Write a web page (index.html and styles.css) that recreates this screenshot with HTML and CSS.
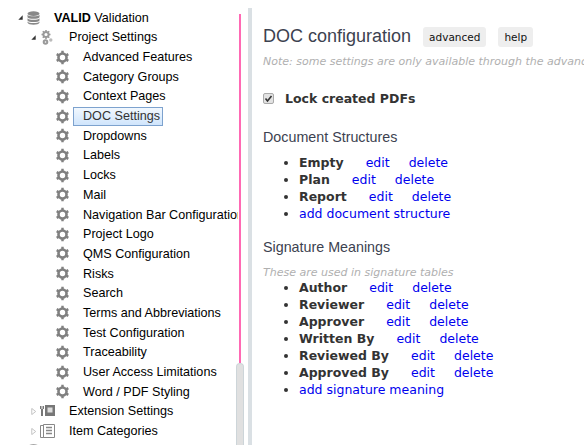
FILE: index.html
```html
<!DOCTYPE html>
<html lang="en">
<head>
<meta charset="utf-8">
<title>DOC configuration</title>
<link rel="stylesheet" href="styles.css">
</head>
<body>
<div class="page">
  <aside class="tree-pane">
    <div class="tree">
      <div class="row root">
        <svg class="arrow" viewBox="0 0 8 8"><path d="M6.500 1.500V6.500H1.500Z"/></svg>
        <svg class="icon db" viewBox="0 0 13 14"><ellipse cx="6.500" cy="2.600" rx="6" ry="2.400"/><path d="M.5 3.800c1 2 11 2 12 0v2.400c-1 2-11 2-12 0zM.5 7.200c1 2 11 2 12 0v2.400c-1 2-11 2-12 0zM.5 10.600c1 2 11 2 12 0v.8c-.5 3-11.500 3-12 0z"/></svg>
        <span class="label"><b>VALID</b> Validation</span>
      </div>
      <div class="row level1">
        <svg class="arrow" viewBox="0 0 8 8"><path d="M6.500 1.500V6.500H1.500Z"/></svg>
        <svg class="icon gears" viewBox="0 0 12 15"><g fill="none" stroke="#999" stroke-width="2"><circle cx="5" cy="4.500" r="2.600"/><circle cx="4.500" cy="12" r="1.800"/></g><circle cx="9.800" cy="10" r="1.700" fill="#bbb"/><path stroke="#999" stroke-width="1.600" d="M5 0v1.500M5 7.500V9M.5 4.500H2M8 4.500h1.500M1.800 1.300l1 1M7.200 6.700l1 1M8.200 1.300l-1 1M2.800 6.700l-1 1"/></svg>
        <span class="label">Project Settings</span>
      </div>
      <div class="row leaf"><svg class="gear" viewBox="0 0 16 16"><use href="#g"/></svg><span class="label">Advanced Features</span></div>
      <div class="row leaf"><svg class="gear" viewBox="0 0 16 16"><use href="#g"/></svg><span class="label">Category Groups</span></div>
      <div class="row leaf"><svg class="gear" viewBox="0 0 16 16"><use href="#g"/></svg><span class="label">Context Pages</span></div>
      <div class="row leaf"><svg class="gear" viewBox="0 0 16 16"><use href="#g"/></svg><span class="label selected">DOC Settings</span></div>
      <div class="row leaf"><svg class="gear" viewBox="0 0 16 16"><use href="#g"/></svg><span class="label">Dropdowns</span></div>
      <div class="row leaf"><svg class="gear" viewBox="0 0 16 16"><use href="#g"/></svg><span class="label">Labels</span></div>
      <div class="row leaf"><svg class="gear" viewBox="0 0 16 16"><use href="#g"/></svg><span class="label">Locks</span></div>
      <div class="row leaf"><svg class="gear" viewBox="0 0 16 16"><use href="#g"/></svg><span class="label">Mail</span></div>
      <div class="row leaf"><svg class="gear" viewBox="0 0 16 16"><use href="#g"/></svg><span class="label clipped">Navigation Bar Configuration</span></div>
      <div class="row leaf"><svg class="gear" viewBox="0 0 16 16"><use href="#g"/></svg><span class="label">Project Logo</span></div>
      <div class="row leaf"><svg class="gear" viewBox="0 0 16 16"><use href="#g"/></svg><span class="label">QMS Configuration</span></div>
      <div class="row leaf"><svg class="gear" viewBox="0 0 16 16"><use href="#g"/></svg><span class="label">Risks</span></div>
      <div class="row leaf"><svg class="gear" viewBox="0 0 16 16"><use href="#g"/></svg><span class="label">Search</span></div>
      <div class="row leaf"><svg class="gear" viewBox="0 0 16 16"><use href="#g"/></svg><span class="label">Terms and Abbreviations</span></div>
      <div class="row leaf"><svg class="gear" viewBox="0 0 16 16"><use href="#g"/></svg><span class="label">Test Configuration</span></div>
      <div class="row leaf"><svg class="gear" viewBox="0 0 16 16"><use href="#g"/></svg><span class="label">Traceability</span></div>
      <div class="row leaf"><svg class="gear" viewBox="0 0 16 16"><use href="#g"/></svg><span class="label">User Access Limitations</span></div>
      <div class="row leaf"><svg class="gear" viewBox="0 0 16 16"><use href="#g"/></svg><span class="label">Word / PDF Styling</span></div>
      <div class="row level1">
        <svg class="arrow open" viewBox="0 0 8 8"><path d="M2 .5L6.500 4 2 7.500Z"/></svg>
        <svg class="icon wide" viewBox="0 0 15 12"><path fill="#777" d="M0 1h1.500v3H0zM2.500 1H4v3H2.500zM1 4h2v7H1zM5 0h10v11H5z"/><rect x="7.500" y="2.500" width="5" height="5" fill="#ddd"/></svg>
        <span class="label">Extension Settings</span>
      </div>
      <div class="row level1">
        <svg class="arrow open" viewBox="0 0 8 8"><path d="M2 .5L6.500 4 2 7.500Z"/></svg>
        <svg class="icon wide" viewBox="0 0 15 14"><path fill="none" stroke="#888" d="M.500 1.500h3v12h-3zM3.500 .5h11v13h-11z"/><path stroke="#888" stroke-width="1.500" d="M6 3.500h6M6 6.500h6M6 9.500h6"/></svg>
        <span class="label">Item Categories</span>
      </div>
      <div class="row root">
        <svg class="arrow open" viewBox="0 0 8 8"></svg>
        <svg class="icon db" viewBox="0 0 13 14"><ellipse cx="6.500" cy="2.600" rx="6" ry="2.400"/></svg>
      </div>
    </div>
    <div class="pink-line"></div>
    <div class="thumb"></div>
  </aside>
  <div class="divider"></div>
  <main class="content">
    <div class="title-row">
      <h1>DOC configuration</h1>
      <span class="tag">advanced</span>
      <span class="tag">help</span>
    </div>
    <p class="note">Note: some settings are only available through the advanced settings</p>
    <label class="check"><input type="checkbox" checked><span>Lock created PDFs</span></label>
    <h2>Document Structures</h2>
    <ul>
      <li><b>Empty</b><a>edit</a><a>delete</a></li>
      <li><b>Plan</b><a>edit</a><a>delete</a></li>
      <li><b>Report</b><a>edit</a><a>delete</a></li>
      <li><a class="add">add document structure</a></li>
    </ul>
    <h2 class="second">Signature Meanings</h2>
    <p class="note sub">These are used in signature tables</p>
    <ul class="tight">
      <li><b>Author</b><a>edit</a><a>delete</a></li>
      <li><b>Reviewer</b><a>edit</a><a>delete</a></li>
      <li><b>Approver</b><a>edit</a><a>delete</a></li>
      <li><b>Written By</b><a>edit</a><a>delete</a></li>
      <li><b>Reviewed By</b><a>edit</a><a>delete</a></li>
      <li><b>Approved By</b><a>edit</a><a>delete</a></li>
      <li><a class="add">add signature meaning</a></li>
    </ul>
  </main>
</div>
<svg class="defs" width="0" height="0"><defs><g id="g"><circle cx="8" cy="8" r="4.300" fill="none" stroke="#808080" stroke-width="2.800"/><path stroke="#808080" stroke-width="2.600" d="M8 .8v2.500M8 12.700v2.500M1.800 4.400l2.200 1.300M12 10.300l2.200 1.300M1.800 11.600l2.200-1.300M12 5.700l2.200-1.300"/></g></defs></svg>
</body>
</html>
```
FILE: styles.css
```css
html, body { margin: 0; height: 100%; overflow: hidden; background: #fff; }
.page { display: flex; height: 445px; width: 584px; overflow: hidden; }
.defs { position: absolute; }
.tree-pane { position: relative; width: 248px; flex: none; overflow: hidden; font: 12.600px "Liberation Sans", Arial, sans-serif; color: #000; }
.tree { padding-top: 7.800px; }
.row { display: flex; align-items: center; height: 19.700px; white-space: nowrap; }
.root { padding-left: 17px; }
.level1 { padding-left: 30px; }
.leaf { padding-left: 55px; overflow: hidden; }
.arrow { width: 7px; height: 7px; fill: #333; flex: none; }
.arrow.open { fill: #fff; stroke: #bbb; stroke-width: 1; }
.icon { width: 13px; height: 14px; margin-left: 3px; flex: none; }
.icon.wide { width: 15px; margin-left: 3px; }
.db { fill: #888; }
.gears { width: 12px; height: 15px; margin-left: 4px; }
.root .label { margin-left: 14px; }
.level1 .label { margin-left: 16px; }
.level1 .wide + .label { margin-left: 14px; }
.gear { width: 15px; height: 15px; flex: none; }
.leaf .label { margin-left: 13px; }
.clipped { width: 155px; overflow: hidden; }
.leaf .selected { border: 1px solid #7da2ce; background: linear-gradient(#f2f8fe, #d0e5fc); margin-left: 3px; padding: 0 2px 0 9px; line-height: 17px; color: #333; }
.pink-line { position: absolute; top: 14px; left: 239px; width: 2px; height: 349px; background: #ff69b4; }
.thumb { position: absolute; top: 363px; left: 236px; width: 8px; height: 90px; background: #e0e0e0; border: 1px solid #cdd5d9; border-bottom: 0; border-radius: 4px 4px 0 0; box-sizing: border-box; }
.divider { width: 4px; flex: none; margin-top: 8px; background: #dae0e4; }
.content { flex: 1; min-width: 0; padding: 25px 0 0 11px; font: 12.500px "DejaVu Sans", sans-serif; color: #333; overflow: hidden; white-space: nowrap; }
.title-row { display: flex; align-items: center; height: 22px; }
h1 { margin: 0; font: 400 18px "Liberation Sans", sans-serif; color: #3c4250; }
.tag { margin: 2px 0 0 12px; padding: 0 6px; height: 20px; background: #eee; border-radius: 3px; font: 10.500px/20px "DejaVu Sans", sans-serif; color: #111; }
.note { margin: 8px 0 0; font: italic 11px "DejaVu Sans", sans-serif; color: #b0b0b0; }
.check { display: flex; align-items: center; margin-top: 23px; font: 700 12.500px "DejaVu Sans", sans-serif; color: #333; }
.check input { appearance: none; margin: 0 11px 0 0; width: 11px; height: 11px; border: 1px solid #aaa; border-radius: 2px; background: #e2e2e2 url("data:image/svg+xml,%3Csvg xmlns='http://www.w3.org/2000/svg' viewBox='0 0 9 9'%3E%3Cpath d='M1.500 4.500l2 2.500 4-5' fill='none' stroke='%23333' stroke-width='1.600'/%3E%3C/svg%3E") center/9px 9px no-repeat; }
h2 { margin: 23px 0 0; font: 400 14.300px "Liberation Sans", sans-serif; color: #3c4250; }
h2.second { margin-top: 17px; }
.sub { margin-top: 11px; }
ul { margin: 9px 0 0; padding-left: 36px; }
ul.tight { margin-top: 0; }
li { height: 17px; line-height: 17px; }
li b { color: #333; margin-right: 8px; }
li a { color: #0000ee; margin-left: 14px; }
li a + a { margin-left: 19px; }
li a.add { margin-left: 0; }
```
